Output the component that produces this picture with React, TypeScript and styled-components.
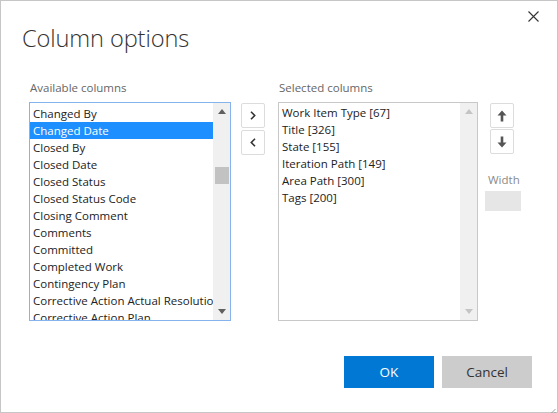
import React from "react";
import styled, { createGlobalStyle } from "styled-components";

const GlobalStyle = createGlobalStyle`
  html, body {
    margin: 0;
    padding: 0;
    background: #ffffff;
  }
  body {
    font-family: "Open Sans", "Noto Sans", sans-serif;
    color: #212121;
  }
`;

const Dialog = styled.div`
  position: relative;
  width: 558px;
  height: 413px;
  box-sizing: border-box;
  border: 1px solid #c6c6c6;
  background: #fff;
  display: flex;
  flex-direction: column;
`;

const Header = styled.div`
  display: flex;
  align-items: flex-start;
  justify-content: space-between;
  padding: 22px 18px 0 21px;
`;

const Title = styled.h1`
  margin: 0;
  font-size: 23.6px;
  font-weight: 300;
  line-height: 31px;
  color: #333;
  letter-spacing: -0.1px;
`;

const CloseButton = styled.button`
  border: none;
  background: none;
  padding: 0;
  margin-top: -13px;
  width: 12px;
  height: 12px;
  display: flex;
  align-items: center;
  justify-content: center;
  cursor: pointer;
`;

const Body = styled.div`
  display: flex;
  align-items: flex-start;
  padding: 26px 0 0 28px;
`;

const Column = styled.div<{ $width: number }>`
  width: ${(p) => p.$width}px;
  display: flex;
  flex-direction: column;
`;

const Label = styled.div`
  font-size: 11.5px;
  line-height: 16px;
  color: #666;
  padding-left: 1px;
  margin-bottom: 6px;
`;

const ListBox = styled.div<{ $focused?: boolean }>`
  height: 219px;
  box-sizing: border-box;
  border: 1px solid ${(p) => (p.$focused ? "#86b3ec" : "#c8c8c8")};
  display: flex;
  overflow: hidden;
`;

const Items = styled.ul<{ $top: number }>`
  flex: 1;
  margin: 0;
  padding: ${(p) => p.$top}px 0 0 0;
  list-style: none;
  overflow: hidden;
`;

const Item = styled.li<{ $selected?: boolean }>`
  height: 17px;
  line-height: 17px;
  font-size: 11.5px;
  padding-left: 3px;
  white-space: nowrap;
  overflow: hidden;
  color: ${(p) => (p.$selected ? "#fff" : "#222")};
  background: ${(p) => (p.$selected ? "#1e8fff" : "transparent")};
`;

const ScrollBar = styled.div`
  width: 17px;
  flex: none;
  background: #f0f0f0;
  display: flex;
  flex-direction: column;
`;

const ScrollArrow = styled.div`
  height: 17px;
  flex: none;
  display: flex;
  align-items: center;
  justify-content: center;
`;

const Track = styled.div`
  flex: 1;
  display: flex;
  flex-direction: column;
  align-items: center;
`;

const Thumb = styled.div<{ $offset: number }>`
  width: 14px;
  height: 17px;
  margin-top: ${(p) => p.$offset}px;
  background: #c2c2c2;
`;

const ButtonStack = styled.div<{ $gap: number }>`
  display: flex;
  flex-direction: column;
  gap: ${(p) => p.$gap}px;
`;

const MoveColumn = styled.div`
  margin: 23px 13px 0 10px;
`;

const SmallButton = styled.button`
  width: 24px;
  height: 25px;
  box-sizing: border-box;
  border: 1px solid #dcdcdc;
  border-radius: 2px;
  background: #fff;
  padding: 0;
  display: flex;
  align-items: center;
  justify-content: center;
  cursor: pointer;
`;

const SideColumn = styled.div`
  margin: 23px 0 0 7px;
  display: flex;
  flex-direction: column;
`;

const SideButtons = styled(ButtonStack)`
  margin-left: 5px;
`;

const WidthLabel = styled.div`
  margin: 18px 0 0 3px;
  font-size: 11.5px;
  line-height: 16px;
  color: #8a8a8a;
`;

const WidthInput = styled.div`
  margin-top: 3px;
  width: 36px;
  height: 20px;
  background: #e6e6e6;
`;

const Footer = styled.div`
  display: flex;
  justify-content: flex-end;
  gap: 8px;
  padding: 35px 25px 0 0;
`;

const FooterButton = styled.button<{ $primary?: boolean }>`
  width: 90px;
  height: 32px;
  border: none;
  font-family: "Open Sans", "Noto Sans", sans-serif;
  font-size: 13.5px;
  cursor: pointer;
  background: ${(p) => (p.$primary ? "#0078d4" : "#cccccc")};
  color: ${(p) => (p.$primary ? "#fff" : "#333")};
`;

const Grip = styled.div`
  position: absolute;
  right: 1px;
  bottom: 1px;
  width: 10px;
  height: 10px;
`;

const available = [
  "Changed By",
  "Changed Date",
  "Closed By",
  "Closed Date",
  "Closed Status",
  "Closed Status Code",
  "Closing Comment",
  "Comments",
  "Committed",
  "Completed Work",
  "Contingency Plan",
  "Corrective Action Actual Resolution",
  "Corrective Action Plan",
];

const selected = [
  "Work Item Type [67]",
  "Title [326]",
  "State [155]",
  "Iteration Path [149]",
  "Area Path [300]",
  "Tags [200]",
];

const Triangle = ({ up, color }: { up?: boolean; color: string }) => (
  <svg width="8" height="5" viewBox="0 0 8 5">
    <path d={up ? "M0 5 L4 0 L8 5 Z" : "M0 0 L8 0 L4 5 Z"} fill={color} />
  </svg>
);

const Chevron = ({ left }: { left?: boolean }) => (
  <svg width="6" height="9" viewBox="0 0 6 9">
    <path
      d={left ? "M5 0.8 L1.3 4.5 L5 8.2" : "M1 0.8 L4.7 4.5 L1 8.2"}
      fill="none"
      stroke="#333"
      strokeWidth="1.6"
    />
  </svg>
);

const Arrow = ({ down }: { down?: boolean }) => (
  <svg width="10" height="12" viewBox="0 0 10 12" style={{ transform: down ? "rotate(180deg)" : undefined }}>
    <path d="M5 0.5 L9.5 5.5 L6.3 5.5 L6.3 11.5 L3.7 11.5 L3.7 5.5 L0.5 5.5 Z" fill="#555" />
  </svg>
);

const App = () => {
  return (
    <>
      <GlobalStyle />
      <Dialog>
        <Header>
          <Title>Column options</Title>
          <CloseButton aria-label="Close">
            <svg width="11" height="11" viewBox="0 0 11 11">
              <path d="M0.5 0.5 L10.5 10.5 M10.5 0.5 L0.5 10.5" stroke="#333" strokeWidth="1.1" />
            </svg>
          </CloseButton>
        </Header>
        <Body>
          <Column $width={202}>
            <Label>Available columns</Label>
            <ListBox $focused>
              <Items $top={2}>
                {available.map((name) => (
                  <Item key={name} $selected={name === "Changed Date"}>
                    {name}
                  </Item>
                ))}
              </Items>
              <ScrollBar>
                <ScrollArrow>
                  <Triangle up color="#606060" />
                </ScrollArrow>
                <Track>
                  <Thumb $offset={47} />
                </Track>
                <ScrollArrow>
                  <Triangle color="#606060" />
                </ScrollArrow>
              </ScrollBar>
            </ListBox>
          </Column>
          <MoveColumn>
            <ButtonStack $gap={2}>
              <SmallButton aria-label="Add">
                <Chevron />
              </SmallButton>
              <SmallButton aria-label="Remove">
                <Chevron left />
              </SmallButton>
            </ButtonStack>
          </MoveColumn>
          <Column $width={200}>
            <Label>Selected columns</Label>
            <ListBox>
              <Items $top={1}>
                {selected.map((name) => (
                  <Item key={name}>{name}</Item>
                ))}
              </Items>
              <ScrollBar>
                <ScrollArrow>
                  <Triangle up color="#c4c4c4" />
                </ScrollArrow>
                <Track />
                <ScrollArrow>
                  <Triangle color="#c4c4c4" />
                </ScrollArrow>
              </ScrollBar>
            </ListBox>
          </Column>
          <SideColumn>
            <SideButtons $gap={1}>
              <SmallButton aria-label="Move up">
                <Arrow />
              </SmallButton>
              <SmallButton aria-label="Move down">
                <Arrow down />
              </SmallButton>
            </SideButtons>
            <WidthLabel>Width</WidthLabel>
            <WidthInput />
          </SideColumn>
        </Body>
        <Footer>
          <FooterButton $primary>OK</FooterButton>
          <FooterButton>Cancel</FooterButton>
        </Footer>
        <Grip>
          <svg width="10" height="10" viewBox="0 0 10 10">
            <path d="M9.5 1 L1 9.5 M9.5 4 L4 9.5 M9.5 7 L7 9.5" stroke="#888" strokeWidth="0.8" />
          </svg>
        </Grip>
      </Dialog>
    </>
  );
};

export default App;
